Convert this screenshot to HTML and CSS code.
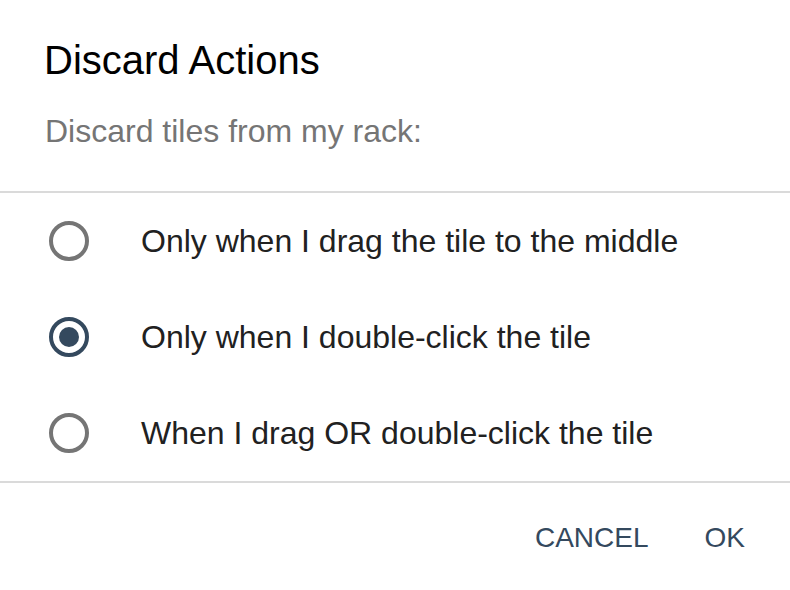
FILE: index.html
```html
<!DOCTYPE html>
<html>
<head>
<meta charset="utf-8">
<link rel="stylesheet" href="styles.css">
</head>
<body>
<div class="dialog">
  <div class="header">
    <h1 class="title">Discard Actions</h1>
    <p class="subtitle">Discard tiles from my rack:</p>
  </div>
  <div class="options">
    <label class="option"><span class="radio"></span><span class="label">Only when I drag the tile to the middle</span></label>
    <label class="option"><span class="radio checked"></span><span class="label">Only when I double-click the tile</span></label>
    <label class="option"><span class="radio"></span><span class="label">When I drag OR double-click the tile</span></label>
  </div>
  <div class="footer">
    <button class="btn">CANCEL</button>
    <button class="btn">OK</button>
  </div>
</div>
</body>
</html>
```
FILE: styles.css
```css
html, body {
  margin: 0;
  padding: 0;
  background: #ffffff;
}
body {
  font-family: "Liberation Sans", Arial, sans-serif;
}
.dialog {
  width: 790px;
  height: 590px;
  display: flex;
  flex-direction: column;
}
.header {
  padding: 36px 44px 0 44px;
  border-bottom: 2px solid #dadada;
  height: 193px;
  box-sizing: border-box;
  flex: none;
}
.title {
  margin: 0;
  font-size: 40px;
  line-height: 48px;
  font-weight: normal;
  color: #000000;
}
.subtitle {
  margin: 27px 0 0 1px;
  font-size: 32px;
  line-height: 40px;
  color: #757575;
}
.options {
  display: flex;
  flex-direction: column;
  border-bottom: 2px solid #dadada;
}
.option {
  height: 96px;
  display: flex;
  align-items: center;
  padding-left: 49px;
  gap: 52px;
}
.radio {
  width: 40px;
  height: 40px;
  box-sizing: border-box;
  border: 4px solid #757575;
  border-radius: 50%;
  display: flex;
  align-items: center;
  justify-content: center;
  flex: none;
}
.radio.checked {
  border-color: #34495e;
}
.radio.checked::after {
  content: "";
  width: 20px;
  height: 20px;
  border-radius: 50%;
  background: #34495e;
}
.label {
  font-size: 32px;
  line-height: 40px;
  color: #212121;
}
.footer {
  display: flex;
  justify-content: flex-end;
  gap: 24px;
  padding: 19px 29px 0 0;
}
.btn {
  height: 72px;
  padding: 0 16px;
  border: none;
  background: transparent;
  font-family: "Liberation Sans", Arial, sans-serif;
  font-size: 28px;
  color: #34495e;
}
```
